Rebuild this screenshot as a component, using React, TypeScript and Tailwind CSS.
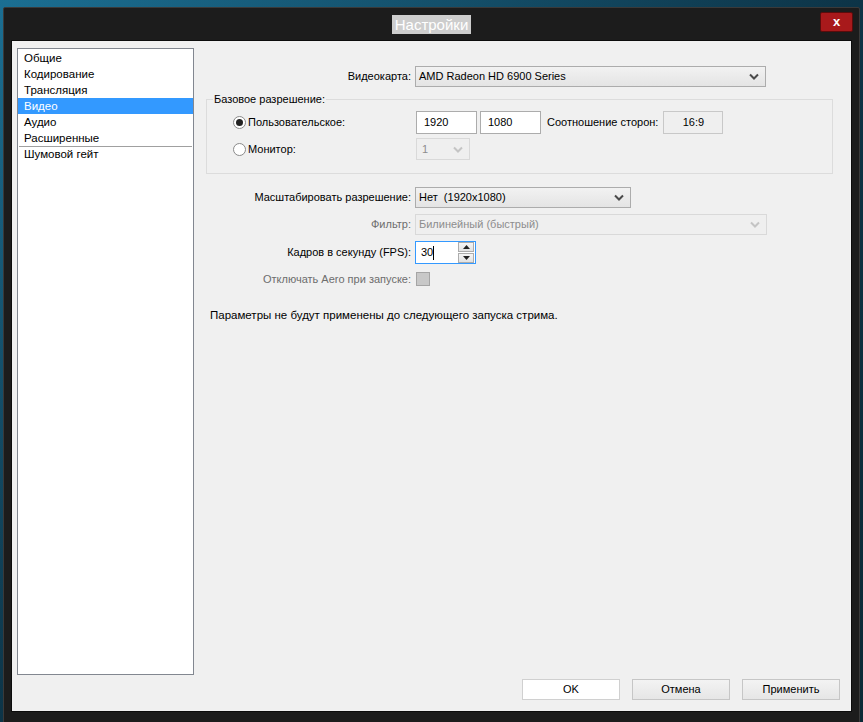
import React from 'react';

const font = { fontFamily: '"Liberation Sans", "DejaVu Sans", sans-serif' };

const Chevron = ({ disabled }: { disabled?: boolean }) => (
    <svg width="10" height="7" viewBox="0 0 10 7" className="shrink-0">
        <path d="M1 1.5 L5 5.5 L9 1.5" fill="none" stroke={disabled ? '#c4c4c4' : '#4a4a4a'} strokeWidth="2" />
    </svg>
);

const Select = ({ value, width, disabled }: { value: string; width: string; disabled?: boolean }) => (
    <div
        className={`${width} h-[21px] flex items-center justify-between pl-[3px] pr-[6px] border ${
            disabled
                ? 'border-[#d9d9d9] bg-[#efefef] text-[#8d8d8d]'
                : 'border-[#acacac] bg-gradient-to-b from-[#f2f2f2] to-[#e4e4e4] text-black'
        }`}
    >
        <span className="whitespace-pre">{value}</span>
        <Chevron disabled={disabled} />
    </div>
);

const Radio = ({ checked }: { checked?: boolean }) => (
    <div className="w-[13px] h-[13px] rounded-full border border-[#8a8a8a] bg-white flex items-center justify-center">
        {checked && <div className="w-[7px] h-[7px] rounded-full bg-[#222]" />}
    </div>
);

const FormRow = ({ label, disabled, children }: { label: string; disabled?: boolean; children: React.ReactNode }) => (
    <div className="flex items-center">
        <div className={`w-[206px] text-right pr-[1px] ${disabled ? 'text-[#6d6d6d]' : 'text-black'}`}>{label}</div>
        <div className="ml-[3px]">{children}</div>
    </div>
);

const menu = ['Общие', 'Кодирование', 'Трансляция', 'Видео', 'Аудио', 'Расширенные'];

const Button = ({ label, primary }: { label: string; primary?: boolean }) => (
    <div
        className={`w-[98px] h-[21px] flex items-center justify-center border ${
            primary ? 'border-[#d0d0d0] bg-white' : 'border-[#c6c6c6] bg-gradient-to-b from-[#f3f3f3] to-[#e6e6e6]'
        }`}
    >
        {label}
    </div>
);

const App = () => {
    return (
        <div
            className="w-[863px] h-[722px] overflow-hidden bg-gradient-to-br from-[#1b6f93] via-[#0d3447] to-[#0a2a36] pt-[7px] pl-[3px]"
            style={font}
        >
            <div className="w-[857px] h-[716px] bg-[#1c1c1c] border border-[#3a3a3a] rounded-t-[2px] flex flex-col">
                {/* title bar */}
                <div className="h-[32px] flex items-center relative">
                    <div className="flex-1 flex justify-center">
                        <span className="bg-[#cdcdcd] text-white text-[15px] leading-[19px] px-[3px] mt-[1px]">Настройки</span>
                    </div>
                    <div className="absolute right-[6px] top-[4px] w-[33px] h-[20px] bg-[#a8191b] border border-[#5a0c0c] rounded-[2px] flex items-center justify-center text-white text-[13px] font-bold">
                        x
                    </div>
                </div>

                {/* content */}
                <div className="ml-[7px] w-[841px] h-[672px] bg-[#f0f0f0] border border-[#0c0c0c] text-[11px] flex flex-col">
                    <div className="flex pt-[7px] pl-[5px]">
                        <div className="w-[177px] h-[627px] bg-white border border-[#828790] pt-[1px]">
                            {menu.map((item) => (
                                <div
                                    key={item}
                                    className={`h-[16px] leading-[16px] pl-[6px] text-[11.5px] ${
                                        item === 'Видео' ? 'bg-[#3399ff] text-white' : 'text-black'
                                    }`}
                                >
                                    {item}
                                </div>
                            ))}
                            <div className="h-px bg-[#a0a0a0] mx-[1px]" />
                            <div className="h-[16px] leading-[15px] pl-[6px] text-black text-[11.5px]">Шумовой гейт</div>
                        </div>

                        <div className="ml-[12px] w-[627px] pt-[18px]">
                            <FormRow label="Видеокарта:">
                                <Select value="AMD Radeon HD 6900 Series" width="w-[351px]" />
                            </FormRow>

                            <div className="relative mt-[12px] h-[75px] border border-[#dcdcdc] pt-[11px]">
                                <span className="absolute -top-[8px] left-[6px] px-[1px] bg-[#f0f0f0] text-black leading-[15px]">
                                    Базовое разрешение:
                                </span>
                                <div className="flex items-center">
                                    <div className="w-[209px] pl-[26px] flex items-center gap-[2px]">
                                        <Radio checked />
                                        <span>Пользовательское:</span>
                                    </div>
                                    <div className="w-[61px] h-[23px] bg-white border border-[#acacac] flex items-center pl-[7px]">1920</div>
                                    <div className="ml-[3px] w-[61px] h-[23px] bg-white border border-[#acacac] flex items-center pl-[7px]">1080</div>
                                    <span className="ml-[6px]">Соотношение сторон:</span>
                                    <div className="ml-[5px] w-[60px] h-[23px] bg-[#efefef] border border-[#c8c8c8] flex items-center justify-center">16:9</div>
                                </div>
                                <div className="flex items-center mt-[4px]">
                                    <div className="w-[209px] pl-[26px] flex items-center gap-[2px]">
                                        <Radio />
                                        <span>Монитор:</span>
                                    </div>
                                    <div className="w-[54px] h-[22px] bg-[#efefef] border border-[#d9d9d9] text-[#8d8d8d] flex items-center justify-between pl-[5px] pr-[6px]">
                                        <span>1</span>
                                        <Chevron disabled />
                                    </div>
                                </div>
                            </div>

                            <div className="mt-[13px]">
                                <FormRow label="Масштабировать разрешение:">
                                    <Select value="Нет  (1920x1080)" width="w-[216px]" />
                                </FormRow>
                            </div>
                            <div className="mt-[6px]">
                                <FormRow label="Фильтр:" disabled>
                                    <Select value="Билинейный (быстрый)" width="w-[352px]" disabled />
                                </FormRow>
                            </div>
                            <div className="mt-[6px]">
                                <FormRow label="Кадров в секунду (FPS):">
                                    <div className="w-[61px] h-[23px] bg-white border border-[#3399ff] flex items-center">
                                        <span className="pl-[5px] flex-1 flex items-center">
                                            30<span className="inline-block w-px h-[14px] bg-black" />
                                        </span>
                                        <div className="w-[16px] h-[21px] mr-[1px] flex flex-col gap-px">
                                            <div className="flex-1 border border-[#acacac] bg-gradient-to-b from-[#f6f6f6] to-[#e2e2e2] flex items-center justify-center">
                                                <svg width="7" height="4" viewBox="0 0 7 4"><path d="M0 4 L3.5 0 L7 4 Z" fill="#222" /></svg>
                                            </div>
                                            <div className="flex-1 border border-[#acacac] bg-gradient-to-b from-[#f6f6f6] to-[#e2e2e2] flex items-center justify-center">
                                                <svg width="7" height="4" viewBox="0 0 7 4"><path d="M0 0 L3.5 4 L7 0 Z" fill="#222" /></svg>
                                            </div>
                                        </div>
                                    </div>
                                </FormRow>
                            </div>
                            <div className="mt-[7px]">
                                <FormRow label="Отключать Aero при запуске:" disabled>
                                    <div className="w-[14px] h-[14px] bg-[#c8c8c8] border border-[#a5a5a5] ml-px" />
                                </FormRow>
                            </div>
                            <div className="mt-[19px] pl-[4px] text-black text-[11.5px]">
                                Параметры не будут применены до следующего запуска стрима.
                            </div>
                        </div>
                    </div>

                    <div className="flex justify-end gap-[12px] mt-[4px] pr-[11px] text-black">
                        <Button label="OK" primary />
                        <Button label="Отмена" />
                        <Button label="Применить" />
                    </div>
                </div>
            </div>
        </div>
    );
};

export default App;
